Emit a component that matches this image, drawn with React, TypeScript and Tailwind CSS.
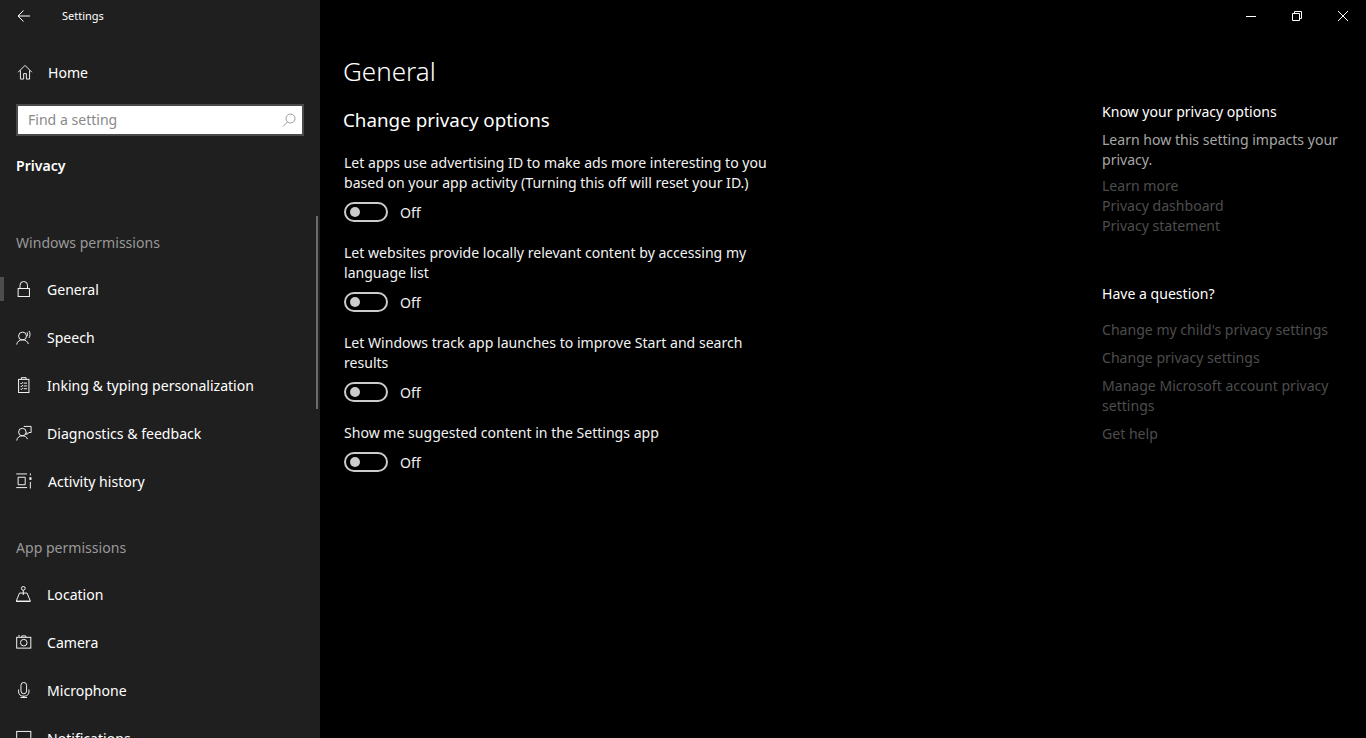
import React from "react";

const Icon = ({ children, w = 18, h = 18, vb = "0 0 18 18", className = "" }: { children: React.ReactNode; w?: number; h?: number; vb?: string; className?: string }) => (
  <svg width={w} height={h} viewBox={vb} fill="none" stroke="currentColor" strokeWidth="1" className={"block shrink-0 " + className}>
    {children}
  </svg>
);

const icons: Record<string, React.ReactNode> = {
  home: <path d="M.5 9 8 1.500 15.500 9M3 7v9.500h3.500v-6h3v6H13V7" />,
  lock: <><rect x="2" y="8" width="12" height="8.500" /><path d="M4 8V4.500a4 4 0 0 1 8 0V8" /></>,
  speech: <><circle cx="6.700" cy="7.500" r="4.200" /><path d="M.5 16.500c.4-3.200 3-5 6.200-5s5.500 1.800 6.200 4.500" /><path d="M11.500 3.500c.8 1.200.8 3 0 4.300M13.500 2c1.500 2 1.500 5.500 0 7.500" /></>,
  clip: <><rect x="2.500" y="2.500" width="11" height="14" /><path d="M5.500 2.500v-1.800h5v1.800M4.500 6.500l1 1 1.500-2M8 6.500h3.500M4.500 9.500l1 1 1.500-2M8 9.500h3.500M4.500 12.500l1 1 1.500-2M8 12.500h3.500" /></>,
  diag: <><circle cx="6.500" cy="7.500" r="4" /><path d="M.5 16.500c.4-3.200 3-5 6-5s4.500 1.200 5.500 3.500M8 1.500h7.800v6.500h-2.500l-2 2.200V8" /></>,
  activity: <><path d="M0 1h11.500M0 15.500h11.500M2 4.500h7.500v8H2zM15 .5v2M15 9.500v7" /><rect x="14" y="4.500" width="2.200" height="2.800" fill="currentColor" stroke="none" /></>,
  location: <><circle cx="7.500" cy="2.500" r="2" /><path d="M7.500 4.500v5M3.500 7.500h8l3.500 8.500H0zM0 16.500h15" /></>,
  camera: <><rect x=".5" y="3.500" width="15" height="11.500" /><circle cx="8" cy="9.200" r="3.500" /><path d="M2 2h2M10.500 3.500l-.500-1.500H6L5.500 3.500" /></>,
  mic: <><rect x="5" y=".5" width="6" height="12" rx="3" /><path d="M2.500 8v2.500a4.500 4.500 0 0 0 4.500 4.500h2a4.500 4.500 0 0 0 4.500-4.500V8M8 15v1.500M4.500 16.500h7" /></>,
  notif: <rect x=".5" y="1.500" width="15" height="14" />,
};

const Row = ({ icon, label, active, tx = "ml-[15px]" }: { icon: string; label: string; active?: boolean; tx?: string }) => (
  <div className="relative flex h-12 items-center pl-4">
    {active && <div className="absolute left-0 top-[12px] h-6 w-1 bg-[#4d4d4d]" />}
    <Icon w={16} h={16} vb="0 0 16.500 17">{icons[icon]}</Icon>
    <span className={"pt-[2px] " + tx}>{label}</span>
  </div>
);

const Setting = ({ lines }: { lines: string[] }) => (
  <div className="flex flex-col gap-[9px]">
    <div className="pl-px pt-px leading-5 text-[#f2f2f2]">
      {lines.map((l) => (
        <div key={l}>{l}</div>
      ))}
    </div>
    <div className="ml-px flex h-5 items-center">
      <div className="flex h-5 w-11 items-center rounded-full border-2 border-[#cccccc] pl-1">
        <div className="h-[10px] w-[10px] rounded-full bg-[#cccccc]" />
      </div>
      <span className="ml-3 pt-[2px] text-[#f2f2f2]">Off</span>
    </div>
  </div>
);

export default function App() {
  return (
    <div className="flex h-[738px] w-full overflow-hidden bg-black text-[14.07px] text-white [font-family:'Noto_Sans',sans-serif]">
      <aside className="relative h-full w-[320px] shrink-0 overflow-hidden bg-[#1f1f1f]">
        <div className="absolute right-[2px] top-[216px] h-[193px] w-[2px] bg-[#6b6b6b]" />
        <div className="flex h-8 items-center">
          <svg width="14" height="14" viewBox="0 0 14 14" fill="none" stroke="currentColor" className="ml-[17px] block shrink-0">
            <path d="M13 7H1M6.500 1.500 1 7l5.500 5.500" />
          </svg>
          <span className="ml-[31px] pt-px text-[11px]">Settings</span>
        </div>
        <div className="box-content flex h-[24px] items-center pl-[17px] pt-[28px]">
          <Icon w={16} h={16} vb="0 0 16 17.500">{icons.home}</Icon>
          <span className="ml-[15px] pt-[2px]">Home</span>
        </div>
        <div className="mx-4 mt-5 flex h-8 items-center border-2 border-[#4a4a4a] bg-white pl-[10px] pr-[6px] text-[#8a8a8a]">
          <span className="flex-1">Find a setting</span>
          <svg width="14" height="14" viewBox="0 0 14 14" fill="none" stroke="#999999" className="block">
            <circle cx="8.500" cy="5.500" r="4.500" />
            <path d="M5.500 9 1 13.500" />
          </svg>
        </div>
        <div className="mt-5 pl-4 font-semibold leading-5">Privacy</div>
        <div className="mt-[57px] pl-4 leading-5 text-[#999999]">Windows permissions</div>
        <div className="mt-3">
          <Row icon="lock" label="General" active />
          <Row icon="speech" label="Speech" />
          <Row icon="clip" label="Inking & typing personalization" />
          <Row icon="diag" label="Diagnostics & feedback" />
          <Row icon="activity" label="Activity history" tx="ml-[16px]" />
        </div>
        <div className="mt-[33px] pl-4 leading-5 text-[#999999]">App permissions</div>
        <div className="mt-3">
          <Row icon="location" label="Location" />
          <Row icon="camera" label="Camera" />
          <Row icon="mic" label="Microphone" />
          <Row icon="notif" label="Notifications" />
        </div>
      </aside>
      <main className="flex min-w-0 flex-1 flex-col">
        <div className="flex h-8 justify-end">
          {[
            <path key="a" d="M0 5.500h10" />,
            <path key="b" d="M.5 2.500h7v7h-7zM2.500 2.500v-2h7v7h-2" />,
            <path key="c" d="M0 0l10 10M10 0 0 10" />,
          ].map((p, i) => (
            <div key={i} className="flex h-8 w-[46px] items-center justify-center">
              <svg width="10" height="10" viewBox="0 0 10 10" fill="none" stroke="currentColor">{p}</svg>
            </div>
          ))}
        </div>
        <div className="flex flex-1">
          <section className="w-[782px] pl-[23px]">
            <h1 className="mt-[16px] text-[26px] font-light leading-[46px]">General</h1>
            <h2 className="mt-[13px] text-[18.8px] leading-[26px]">Change privacy options</h2>
            <div className="mt-[19px] flex flex-col gap-5">
              <Setting lines={["Let apps use advertising ID to make ads more interesting to you", "based on your app activity (Turning this off will reset your ID.)"]} />
              <Setting lines={["Let websites provide locally relevant content by accessing my", "language list"]} />
              <Setting lines={["Let Windows track app launches to improve Start and search", "results"]} />
              <Setting lines={["Show me suggested content in the Settings app"]} />
            </div>
          </section>
          <section className="flex-1 pt-[70px] leading-5">
            <div>Know your privacy options</div>
            <div className="mt-2 text-[#a6a6a6]">Learn how this setting impacts your<br />privacy.</div>
            <div className="mt-[6px] text-[#4d4d4d]">
              <div>Learn more</div>
              <div>Privacy dashboard</div>
              <div>Privacy statement</div>
            </div>
            <div className="mt-[48px]">Have a question?</div>
            <div className="mt-4 flex flex-col gap-2 text-[#4d4d4d]">
              <div>Change my child's privacy settings</div>
              <div>Change privacy settings</div>
              <div>Manage Microsoft account privacy<br />settings</div>
              <div>Get help</div>
            </div>
          </section>
        </div>
      </main>
    </div>
  );
}
